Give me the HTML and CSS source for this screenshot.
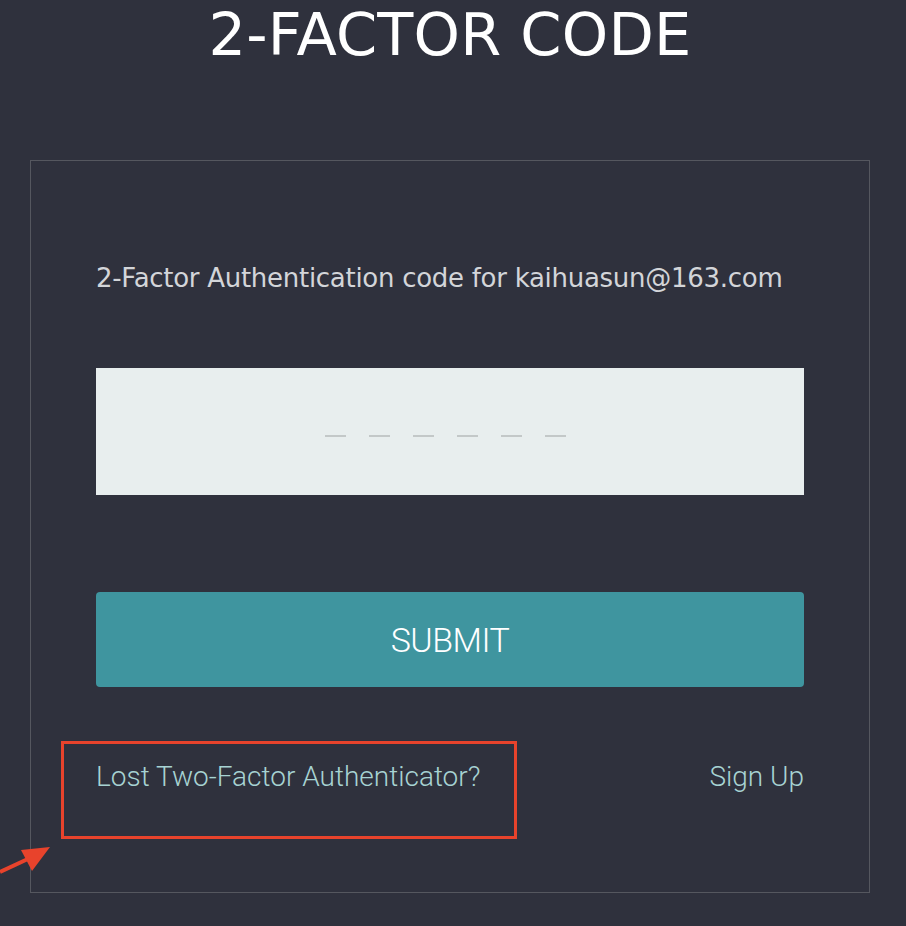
FILE: index.html
```html
<!DOCTYPE html>
<html lang="en">
<head>
<meta charset="utf-8">
<title>2-Factor Code</title>
<link rel="stylesheet" href="styles.css">
</head>
<body>
<div class="page">
  <h1 class="title">2-FACTOR CODE</h1>
  <div class="card">
    <p class="label">2-Factor Authentication code for kaihuasun@163.com</p>
    <div class="code-input">
      <span class="dash"></span><span class="dash"></span><span class="dash"></span><span class="dash"></span><span class="dash"></span><span class="dash"></span>
    </div>
    <button class="submit" type="button">SUBMIT</button>
    <div class="links">
      <a class="link" href="#">Lost Two-Factor Authenticator?</a>
      <a class="link" href="#">Sign Up</a>
    </div>
  </div>
  <div class="highlight"></div>
  <svg class="arrow" width="60" height="60" viewBox="0 0 60 60">
    <line x1="0" y1="43" x2="30" y2="29" stroke="#e8432c" stroke-width="4"/>
    <polygon points="50,18 21,21 32,42" fill="#e8432c"/>
  </svg>
</div>
</body>
</html>
```
FILE: styles.css
```css
html, body {
  margin: 0;
  padding: 0;
  background: #2f313d;
}
body {
  width: 906px;
  height: 926px;
  overflow: hidden;
}
.page {
  position: relative;
  padding-left: 30px;
  width: 840px;
}
.title {
  margin: 0;
  height: 75px;
  font-family: "DejaVu Sans", sans-serif;
  font-weight: 400;
  font-size: 59px;
  line-height: 69px;
  letter-spacing: 0.2px;
  color: #ffffff;
  text-align: center;
}
.card {
  margin-top: 85px;
  height: 731px;
  border: 1px solid #55575f;
  padding: 0 65px;
  box-sizing: content-box;
  width: 708px;
}
.label {
  margin: 100px 0 0;
  font-family: "DejaVu Sans", sans-serif;
  font-size: 26px;
  line-height: 34px;
  letter-spacing: -0.28px;
  white-space: nowrap;
  color: #d3d5d9;
}
.code-input {
  margin-top: 73px;
  height: 127px;
  background: #e8eeee;
  display: flex;
  align-items: center;
  justify-content: center;
  gap: 23px;
  padding-top: 8px;
  padding-right: 9px;
  box-sizing: border-box;
}
.dash {
  width: 21px;
  height: 2px;
  background: #c3c8c8;
}
.submit {
  display: block;
  margin-top: 97px;
  width: 100%;
  height: 95px;
  border: 0;
  border-radius: 4px;
  background: #3f959f;
  color: #ffffff;
  font-family: Roboto, sans-serif;
  font-weight: 300;
  font-size: 34px;
  letter-spacing: -0.5px;
  padding: 0;
}
.links {
  margin-top: 72px;
  display: flex;
  justify-content: space-between;
  align-items: baseline;
}
.link {
  font-family: Roboto, sans-serif;
  font-weight: 300;
  font-size: 28px;
  line-height: 36px;
  color: #a7d3d3;
  text-decoration: none;
}
.highlight {
  position: absolute;
  left: 61px;
  top: 741px;
  width: 456px;
  height: 98px;
  border: 3px solid #e8432c;
  box-sizing: border-box;
}
.arrow {
  position: absolute;
  left: 0;
  top: 829px;
}
```
